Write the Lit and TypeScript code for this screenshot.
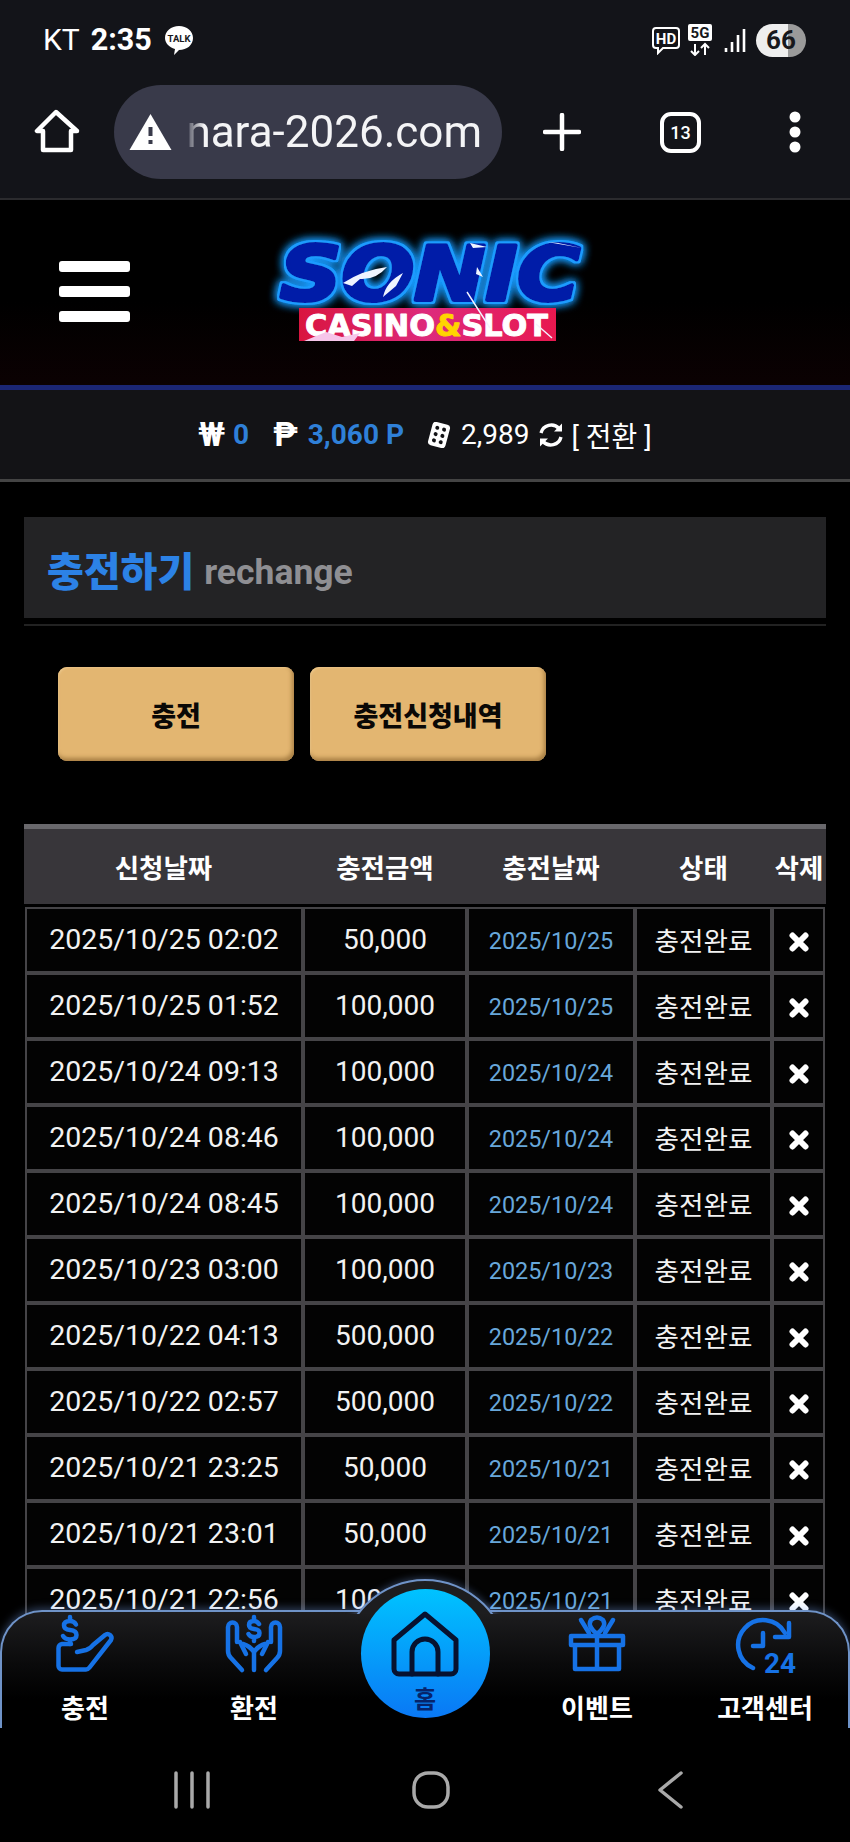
import { LitElement, html, css, svg } from "lit";
import { customElement } from "lit/decorators.js";

const ROWS: [string, string, string][] = [
  ["2025/10/25 02:02", "50,000", "2025/10/25"],
  ["2025/10/25 01:52", "100,000", "2025/10/25"],
  ["2025/10/24 09:13", "100,000", "2025/10/24"],
  ["2025/10/24 08:46", "100,000", "2025/10/24"],
  ["2025/10/24 08:45", "100,000", "2025/10/24"],
  ["2025/10/23 03:00", "100,000", "2025/10/23"],
  ["2025/10/22 04:13", "500,000", "2025/10/22"],
  ["2025/10/22 02:57", "500,000", "2025/10/22"],
  ["2025/10/21 23:25", "50,000", "2025/10/21"],
  ["2025/10/21 23:01", "50,000", "2025/10/21"],
  ["2025/10/21 22:56", "100,000", "2025/10/21"],
];

const ICON_CHARGE = svg`
  <path d="M19 8.5 Q17 5 13 5 Q7 5 7 9.5 Q7 13.5 13 14 Q19.5 14.5 19.5 19 Q19.5 23.5 13 23.5 Q8 23.5 6 20 M13 1 V5 M13 23.5 V28"/>
  <path d="M14 28 H5 A4 4 0 0 0 1.5 32 V50 A3.5 3.5 0 0 0 5 53.5 H29 Q31 53.5 32.5 51.5 L54 24 A4 4 0 0 0 48 19 L36 29 Q33 33 29 34 L20 36"/>`;
const ICON_SWAP = svg`
  <path d="M33 8 Q31 5 28 5 Q23 5 23 9 Q23 12.5 28 13 Q33.5 13.5 33.5 17 Q33.5 21 28 21 Q24 21 22.5 18 M28 1 V5 M28 21 V25"/>
  <path d="M16 54 L5 42 Q2 39 2 35 V11 A4.5 4.5 0 0 1 11 11 V26 M14 26 L20 38"/>
  <path d="M40 54 L51 42 Q54 39 54 35 V11 A4.5 4.5 0 0 0 45 11 V26 M42 26 L36 38"/>
  <path d="M28 54 V36 Q24 30 17 28 M28 36 Q32 30 39 28"/>`;
const ICON_GIFT = svg`
  <path d="M6 29 V53 H50 V29 M2 29 V20 H54 V29 Z M28 20 V53"/>
  <path d="M28 18 Q18 10 22 4 Q28 -1 34 4 Q38 10 28 18 Z M12 4 L20 17 M44 4 L36 17"/>`;

@customElement("app-root")
export class AppRoot extends LitElement {
  static styles = css`
    :host {
      display: block;
      position: relative;
      width: 850px;
      height: 1842px;
      overflow: hidden;
      background: #000;
      color: #fff;
      font-family: Roboto, "Noto Sans CJK KR", sans-serif;
    }
    svg { display: block; flex: none; }

    .chrome { background: #131419; height: 198px; border-bottom: 2px solid #2b2b2e; }
    .status { height: 80px; display: flex; align-items: center; padding: 0 44px 0 43px; }
    .carrier { font-size: 30px; font-weight: 400; margin-top: -2px; }
    .clock { font-size: 30.5px; font-weight: 700; margin-left: 11px; margin-top: -2px; }
    .talk { margin-left: 12px; }
    .spacer { flex: 1; }
    .hd { margin-right: 8px; margin-left: 1px; }
    .fiveg { margin-right: 12px; }
    .sig { margin-right: 10px; }
    .battery {
      width: 50px; height: 33px; border-radius: 17px;
      background: linear-gradient(90deg, #eeeeee 0 64%, #9a9a9a 64%);
      color: #17181c; font-size: 26px; font-weight: 700;
      display: flex; align-items: center; justify-content: center;
    }
    .browser { display: flex; align-items: center; height: 118px; padding: 2px 0 16px 30px; box-sizing: border-box; }
    .pill {
      width: 388px; height: 94px; margin-left: 32px; border-radius: 47px;
      background: #393a4a; display: flex; align-items: center; box-sizing: border-box; padding-left: 15px;
    }
    .url-wrap {
      flex: 1; min-width: 0; overflow: hidden; display: flex; justify-content: flex-end;
      padding-right: 20px; margin-left: 12px;
      -webkit-mask-image: linear-gradient(90deg, transparent 0, #000 20px);
      mask-image: linear-gradient(90deg, transparent 0, #000 20px);
    }
    .url { font-size: 44px; white-space: nowrap; color: #f4f4f6; line-height: 54px; }
    .plus { margin-left: 41px; }
    .tabs {
      margin-left: 79px; width: 41px; height: 41px; box-sizing: border-box; border: 4px solid #fff; border-radius: 11px;
      display: flex; align-items: center; justify-content: center; font-size: 18px; font-weight: 500;
    }
    .dots { margin-left: 87px; }

    .header {
      height: 185px; display: flex; align-items: flex-start; position: relative;
      background: linear-gradient(#000 55%, #0b0102);
      border-bottom: 5px solid #1b2674;
    }
    .burger { margin: 61px 0 0 59px; display: flex; flex-direction: column; gap: 14px; }
    .burger i { display: block; width: 71px; height: 11px; border-radius: 3px; background: #fff; }
    .logo { margin: 24px 0 0 138px; overflow: visible; }
    .logo .sonic { font-family: "DejaVu Sans", sans-serif; font-weight: 700; font-style: italic; }
    .logo .casino { font-family: "DejaVu Sans", sans-serif; font-weight: 700; }

    .balance {
      height: 89px; background: #131316; border-bottom: 3px solid #444;
      display: flex; align-items: center; justify-content: center;
      font-size: 28px;
    }
    .balance .sym { font-weight: 700; font-size: 33px; }
    .balance .val { color: #2f80d8; font-weight: 700; }
    .b0 { margin-left: 8px; margin-right: 24px; }
    .b1 { margin-left: 10px; margin-right: 22px; }
    .dice { margin-right: 9px; }
    .ref { margin: 0 7px 0 9px; }

    main { padding: 35px 24px 0; }
    .title {
      height: 101px; background: #232325; display: flex; align-items: center; padding: 2px 0 0 23px; gap: 10px;
      font-weight: 700; box-sizing: border-box;
    }
    .title b { font-size: 40px; color: #2c82e6; }
    .title span { font-size: 35.5px; color: #8f8f93; font-weight: 700; margin-top: 7px; }
    .rule { height: 2px; background: #222; margin-top: 6px; }
    .btns { display: flex; gap: 16px; margin: 41px 0 0 34px; }
    .btn {
      width: 236px; height: 94px; border-radius: 9px; color: #0a0806; font-weight: 900; font-size: 27px;
      background: #e3b671; display: flex; align-items: center; justify-content: center;
      box-shadow: inset -2px -3px 4px #a87f44, inset 1px 1px 2px #efca8e;
    }
    .table { margin-top: 63px; }
    .thead {
      display: grid; grid-template-columns: 279px 164px 168px 137px 54px;
      height: 80px; box-sizing: border-box; background: #38363a; border-top: 5px solid #69686c;
      font-weight: 700; font-size: 26.5px;
    }
    .thead div { display: flex; align-items: center; justify-content: center; white-space: nowrap; }
    .tbody { margin: 3px 1px 0; }
    .tr { display: grid; grid-template-columns: 278px 164px 168px 137px 53px; height: 66px; }
    .td {
      border: 2px solid #454447; background: #030303; box-sizing: border-box; padding-bottom: 2px;
      display: flex; align-items: center; justify-content: center; font-size: 28.5px; color: #f2f2f2; white-space: nowrap;
    }
    .td.amt { font-size: 28px; }
    .td.date { color: #68a7da; font-size: 23.4px; padding: 2px 0 0; }
    .td.state { font-size: 26.6px; }
    .td.del { padding: 3px 0 0; }

    .nav {
      position: absolute; left: 0; top: 1610px; width: 850px; height: 118px; box-sizing: border-box;
      border: 2px solid #6f93c8; border-bottom: 0; border-radius: 42px 42px 0 0;
      background: linear-gradient(#1d1d1f, #0a0a0b 45%, #000 75%);
      box-shadow: 0 -2px 8px rgba(130, 175, 255, 0.35);
    }
    .bump { position: absolute; left: 323px; top: -42px; width: 200px; height: 44px; overflow: hidden; }
    .bump i {
      position: absolute; left: 16px; top: 9px; width: 168px; height: 168px; box-sizing: border-box; border-radius: 50%;
      border: 2px solid #6f93c8; background: #1d1d1f; box-shadow: 0 0 8px rgba(130, 175, 255, 0.4);
    }
    .home {
      position: absolute; left: 358.5px; top: -23px; width: 129px; height: 129px; border-radius: 50%;
      background: linear-gradient(#00c3ff, #0a78f5);
      display: flex; flex-direction: column; align-items: center;
      color: #06246b; font-weight: 700; font-size: 24px; line-height: 26px;
    }
    .home svg { margin-top: 22px; }
    .home span { margin-top: 10px; }
    .items { position: absolute; inset: 0; }
    .item {
      position: absolute; top: 4px; width: 120px; display: flex; flex-direction: column; align-items: center;
      font-weight: 700; font-size: 26px; color: #fff; white-space: nowrap;
    }
    .item span { margin-top: 19px; line-height: 34px; }
    .ico { fill: none; stroke: #1672e6; stroke-width: 4.5; stroke-linecap: round; stroke-linejoin: round; overflow: visible; }
    .ico text { fill: #1672e6; stroke: none; font-size: 28px; font-weight: 700; font-family: Roboto, sans-serif; }

    .sys {
      position: absolute; left: 0; top: 1728px; width: 850px; height: 114px; background: #000;
      display: flex; align-items: flex-start; padding-top: 43px; box-sizing: border-box;
    }
    .sys svg { fill: none; stroke: #a9a9a9; stroke-width: 3.5; stroke-linecap: round; stroke-linejoin: round; }
    .s1 { margin-left: 173px; }
    .s2 { margin-left: 201px; }
    .s3 { margin-left: 207px; }
  `;

  private logo() {
    return html`<svg class="logo" width="320" height="130" viewBox="0 0 320 130">
      <defs>
        <filter id="neon" x="-15%" y="-40%" width="130%" height="180%">
          <feMorphology in="SourceAlpha" operator="dilate" radius="2" result="fat" />
          <feFlood flood-color="#1e9bff" />
          <feComposite in2="fat" operator="in" result="edge" />
          <feGaussianBlur in="edge" stdDeviation="5" result="blur" />
          <feMerge>
            <feMergeNode in="blur" />
            <feMergeNode in="blur" />
            <feMergeNode in="edge" />
            <feMergeNode in="SourceGraphic" />
          </feMerge>
        </filter>
        <linearGradient id="cfill" x1="0" y1="0" x2="1" y2="0">
          <stop offset="0" stop-color="#d9153f" />
          <stop offset="0.5" stop-color="#dd2a7c" />
          <stop offset="1" stop-color="#e8184f" />
        </linearGradient>
      </defs>
      <text class="sonic" font-size="74" x="12" y="76" textLength="300" lengthAdjust="spacingAndGlyphs"
        fill="#061ba8" stroke="#061ba8" stroke-width="4" stroke-linejoin="round" filter="url(#neon)">SONIC</text>
      <path d="M75 59 Q95 46 119 43 Q108 56 92 55 L84 62 Z M115 73 Q118 58 135 49 L128 62 Z M202 19 L219 23 L205 24 Z M209 43 L215 53 L208 50 Z M279 18 L314 24 L290 19 Z" fill="#eef4ff"/>
      <rect x="31" y="84" width="257" height="33" fill="url(#cfill)" />
      <text class="casino" x="37" y="112" font-size="30" textLength="243" lengthAdjust="spacingAndGlyphs"
        fill="#fff" stroke="#fff" stroke-width="1" stroke-linejoin="round">CASINO<tspan fill="#ffd400" stroke="#ffd400">&amp;</tspan>SLOT</text>
      <path d="M36 117 L58 108 L74 113 L92 109 L86 117 Z" fill="#f6c6ea"/>
      <path d="M199 68 L222 104 M268 100 L284 114" stroke="#f3f3ff" stroke-width="1.4" fill="none"/>
    </svg>`;
  }

  render() {
    return html`
      <div class="chrome">
        <div class="status">
          <span class="carrier">KT</span><span class="clock">2:35</span>
          <svg class="talk" width="30" height="30" viewBox="0 0 30 30">
            <path d="M15 1 C23 1 29 6 29 13 C29 20 23 25 15 25 L10 30 L11 24 C5 22 1 18 1 13 C1 6 7 1 15 1 Z" fill="#fff"/>
            <text x="15" y="17" text-anchor="middle" font-size="9.5" font-weight="700" font-family="Roboto, sans-serif" fill="#17181c">TALK</text>
          </svg>
          <div class="spacer"></div>
          <svg class="hd" width="28" height="30" viewBox="0 0 28 30">
            <path d="M4 3 H24 A3 3 0 0 1 27 6 V20 A3 3 0 0 1 24 23 H11 L6 28 V23 H4 A3 3 0 0 1 1 20 V6 A3 3 0 0 1 4 3 Z" fill="none" stroke="#fff" stroke-width="2"/>
            <text x="14" y="18.5" text-anchor="middle" font-size="15" font-weight="700" font-family="Roboto, sans-serif" fill="#fff">HD</text>
          </svg>
          <svg class="fiveg" width="24" height="32" viewBox="0 0 24 32">
            <rect x="0" y="0" width="24" height="17" rx="2" fill="#fff"/>
            <text x="12" y="14" text-anchor="middle" font-size="15" font-weight="700" font-family="Roboto, sans-serif" fill="#17181c">5G</text>
            <path d="M7 20 V31 M3 27 L7 31 L11 27 M17 31 V20 M13 24 L17 20 L21 24" fill="none" stroke="#fff" stroke-width="2"/>
          </svg>
          <svg class="sig" width="22" height="25" viewBox="0 0 22 25">
            <path d="M2 20 V24 M8 14 V24 M14 7 V24 M20 1 V24" stroke="#fff" stroke-width="2.6" fill="none"/>
          </svg>
          <div class="battery">66</div>
        </div>
        <div class="browser">
          <svg width="52" height="46" viewBox="0 0 52 46" fill="none" stroke="#fff" stroke-width="4.5" stroke-linejoin="round" stroke-linecap="round">
            <path d="M26 3 L7 22 H13 V41 H41 V22 H47 Z"/>
          </svg>
          <div class="pill">
            <svg width="43" height="38" viewBox="0 0 43 38">
              <path d="M21.5 1 L42.5 37 H0.5 Z" fill="#fff"/>
              <path d="M19.5 14 H23.5 V23 H19.5 Z M19.5 27 H23.5 V31 H19.5 Z" fill="#393a4a"/>
            </svg>
            <div class="url-wrap"><span class="url">nara-2026.com</span></div>
          </div>
          <svg class="plus" width="38" height="38" viewBox="0 0 38 38" stroke="#fff" stroke-width="4.5" stroke-linecap="round">
            <path d="M19 2 V36 M2 19 H36"/>
          </svg>
          <div class="tabs">13</div>
          <svg class="dots" width="14" height="42" viewBox="0 0 14 42" fill="#fff">
            <circle cx="7" cy="6" r="5.5"/><circle cx="7" cy="21" r="5.5"/><circle cx="7" cy="36" r="5.5"/>
          </svg>
        </div>
      </div>

      <div class="header">
        <div class="burger"><i></i><i></i><i></i></div>
        ${this.logo()}
      </div>

      <div class="balance">
        <span class="sym">₩</span><span class="val b0">0</span>
        <span class="sym">₱</span><span class="val b1">3,060 P</span>
        <svg class="dice" width="26" height="26" viewBox="0 0 26 26">
          <g transform="rotate(15 13 13)">
            <rect x="4" y="1" width="18" height="24" rx="3.5" fill="#fff"/>
            <g fill="#131316">
              <circle cx="9.5" cy="6.5" r="2"/><circle cx="16.5" cy="6.5" r="2"/>
              <circle cx="9.5" cy="13" r="2"/><circle cx="16.5" cy="13" r="2"/>
              <circle cx="9.5" cy="19.5" r="2"/><circle cx="16.5" cy="19.5" r="2"/>
            </g>
          </g>
        </svg>
        <span>2,989</span>
        <svg class="ref" width="26" height="26" viewBox="0 0 26 26" fill="none" stroke="#fff" stroke-width="3.4">
          <path d="M3 11 A10.5 10.5 0 0 1 21 6.5 M23 15 A10.5 10.5 0 0 1 5 19.5"/>
          <path d="M24 1.5 V9.5 H16 Z M2 24.5 V16.5 H10 Z" fill="#fff" stroke="none"/>
        </svg>
        <span>[ 전환 ]</span>
      </div>

      <main>
        <div class="title"><b>충전하기</b><span>rechange</span></div>
        <div class="rule"></div>
        <div class="btns">
          <div class="btn">충전</div>
          <div class="btn">충전신청내역</div>
        </div>
        <div class="table">
          <div class="thead">
            <div>신청날짜</div><div>충전금액</div><div>충전날짜</div><div>상태</div><div>삭제</div>
          </div>
          <div class="tbody">
            ${ROWS.map(
              (r) => html`<div class="tr">
                <div class="td">${r[0]}</div>
                <div class="td amt">${r[1]}</div>
                <div class="td date">${r[2]}</div>
                <div class="td state">충전완료</div>
                <div class="td del">
                  <svg width="20" height="20" viewBox="0 0 20 20" stroke="#fff" stroke-width="6" stroke-linecap="round">
                    <path d="M3.5 3.5 L16.5 16.5 M16.5 3.5 L3.5 16.5"/>
                  </svg>
                </div>
              </div>`
            )}
          </div>
        </div>
      </main>

      <nav class="nav">
        <div class="bump"><i></i></div>
        <div class="items">
          <div class="item" style="left:23px">
            <svg class="ico" width="56" height="57" viewBox="0 0 56 57">${ICON_CHARGE}</svg><span>충전</span>
          </div>
          <div class="item" style="left:192px">
            <svg class="ico" width="56" height="57" viewBox="0 0 56 57">${ICON_SWAP}</svg><span>환전</span>
          </div>
          <div class="item" style="left:535px">
            <svg class="ico" width="56" height="57" viewBox="0 0 56 57">${ICON_GIFT}</svg><span>이벤트</span>
          </div>
          <div class="item" style="left:703px">
            <svg class="ico" width="58" height="57" viewBox="0 0 58 57">
              <path d="M17 52 A25 25 0 1 1 49 17"/>
              <path d="M53 7 V21 H39" />
              <path d="M27 17 V30 H17"/>
              <text x="28" y="57">24</text>
            </svg>
            <span>고객센터</span>
          </div>
        </div>
        <div class="home">
          <svg width="68" height="66" viewBox="0 0 68 66" fill="none" stroke="#07122f" stroke-width="5" stroke-linejoin="round" stroke-linecap="round">
            <path d="M34 3 L3 29 V58 A5 5 0 0 0 8 63 H60 A5 5 0 0 0 65 58 V29 Z"/>
            <path d="M21 63 V41 A13 13 0 0 1 47 41 V63"/>
          </svg>
          <span>홈</span>
        </div>
      </nav>

      <div class="sys">
        <svg class="s1" width="38" height="38" viewBox="0 0 38 38"><path d="M3 2 V36 M19 2 V36 M35 2 V36"/></svg>
        <svg class="s2" width="38" height="38" viewBox="0 0 38 38"><rect x="2" y="2" width="34" height="34" rx="14"/></svg>
        <svg class="s3" width="26" height="38" viewBox="0 0 26 38"><path d="M24 2 L3 19 L24 36"/></svg>
      </div>
    `;
  }
}
